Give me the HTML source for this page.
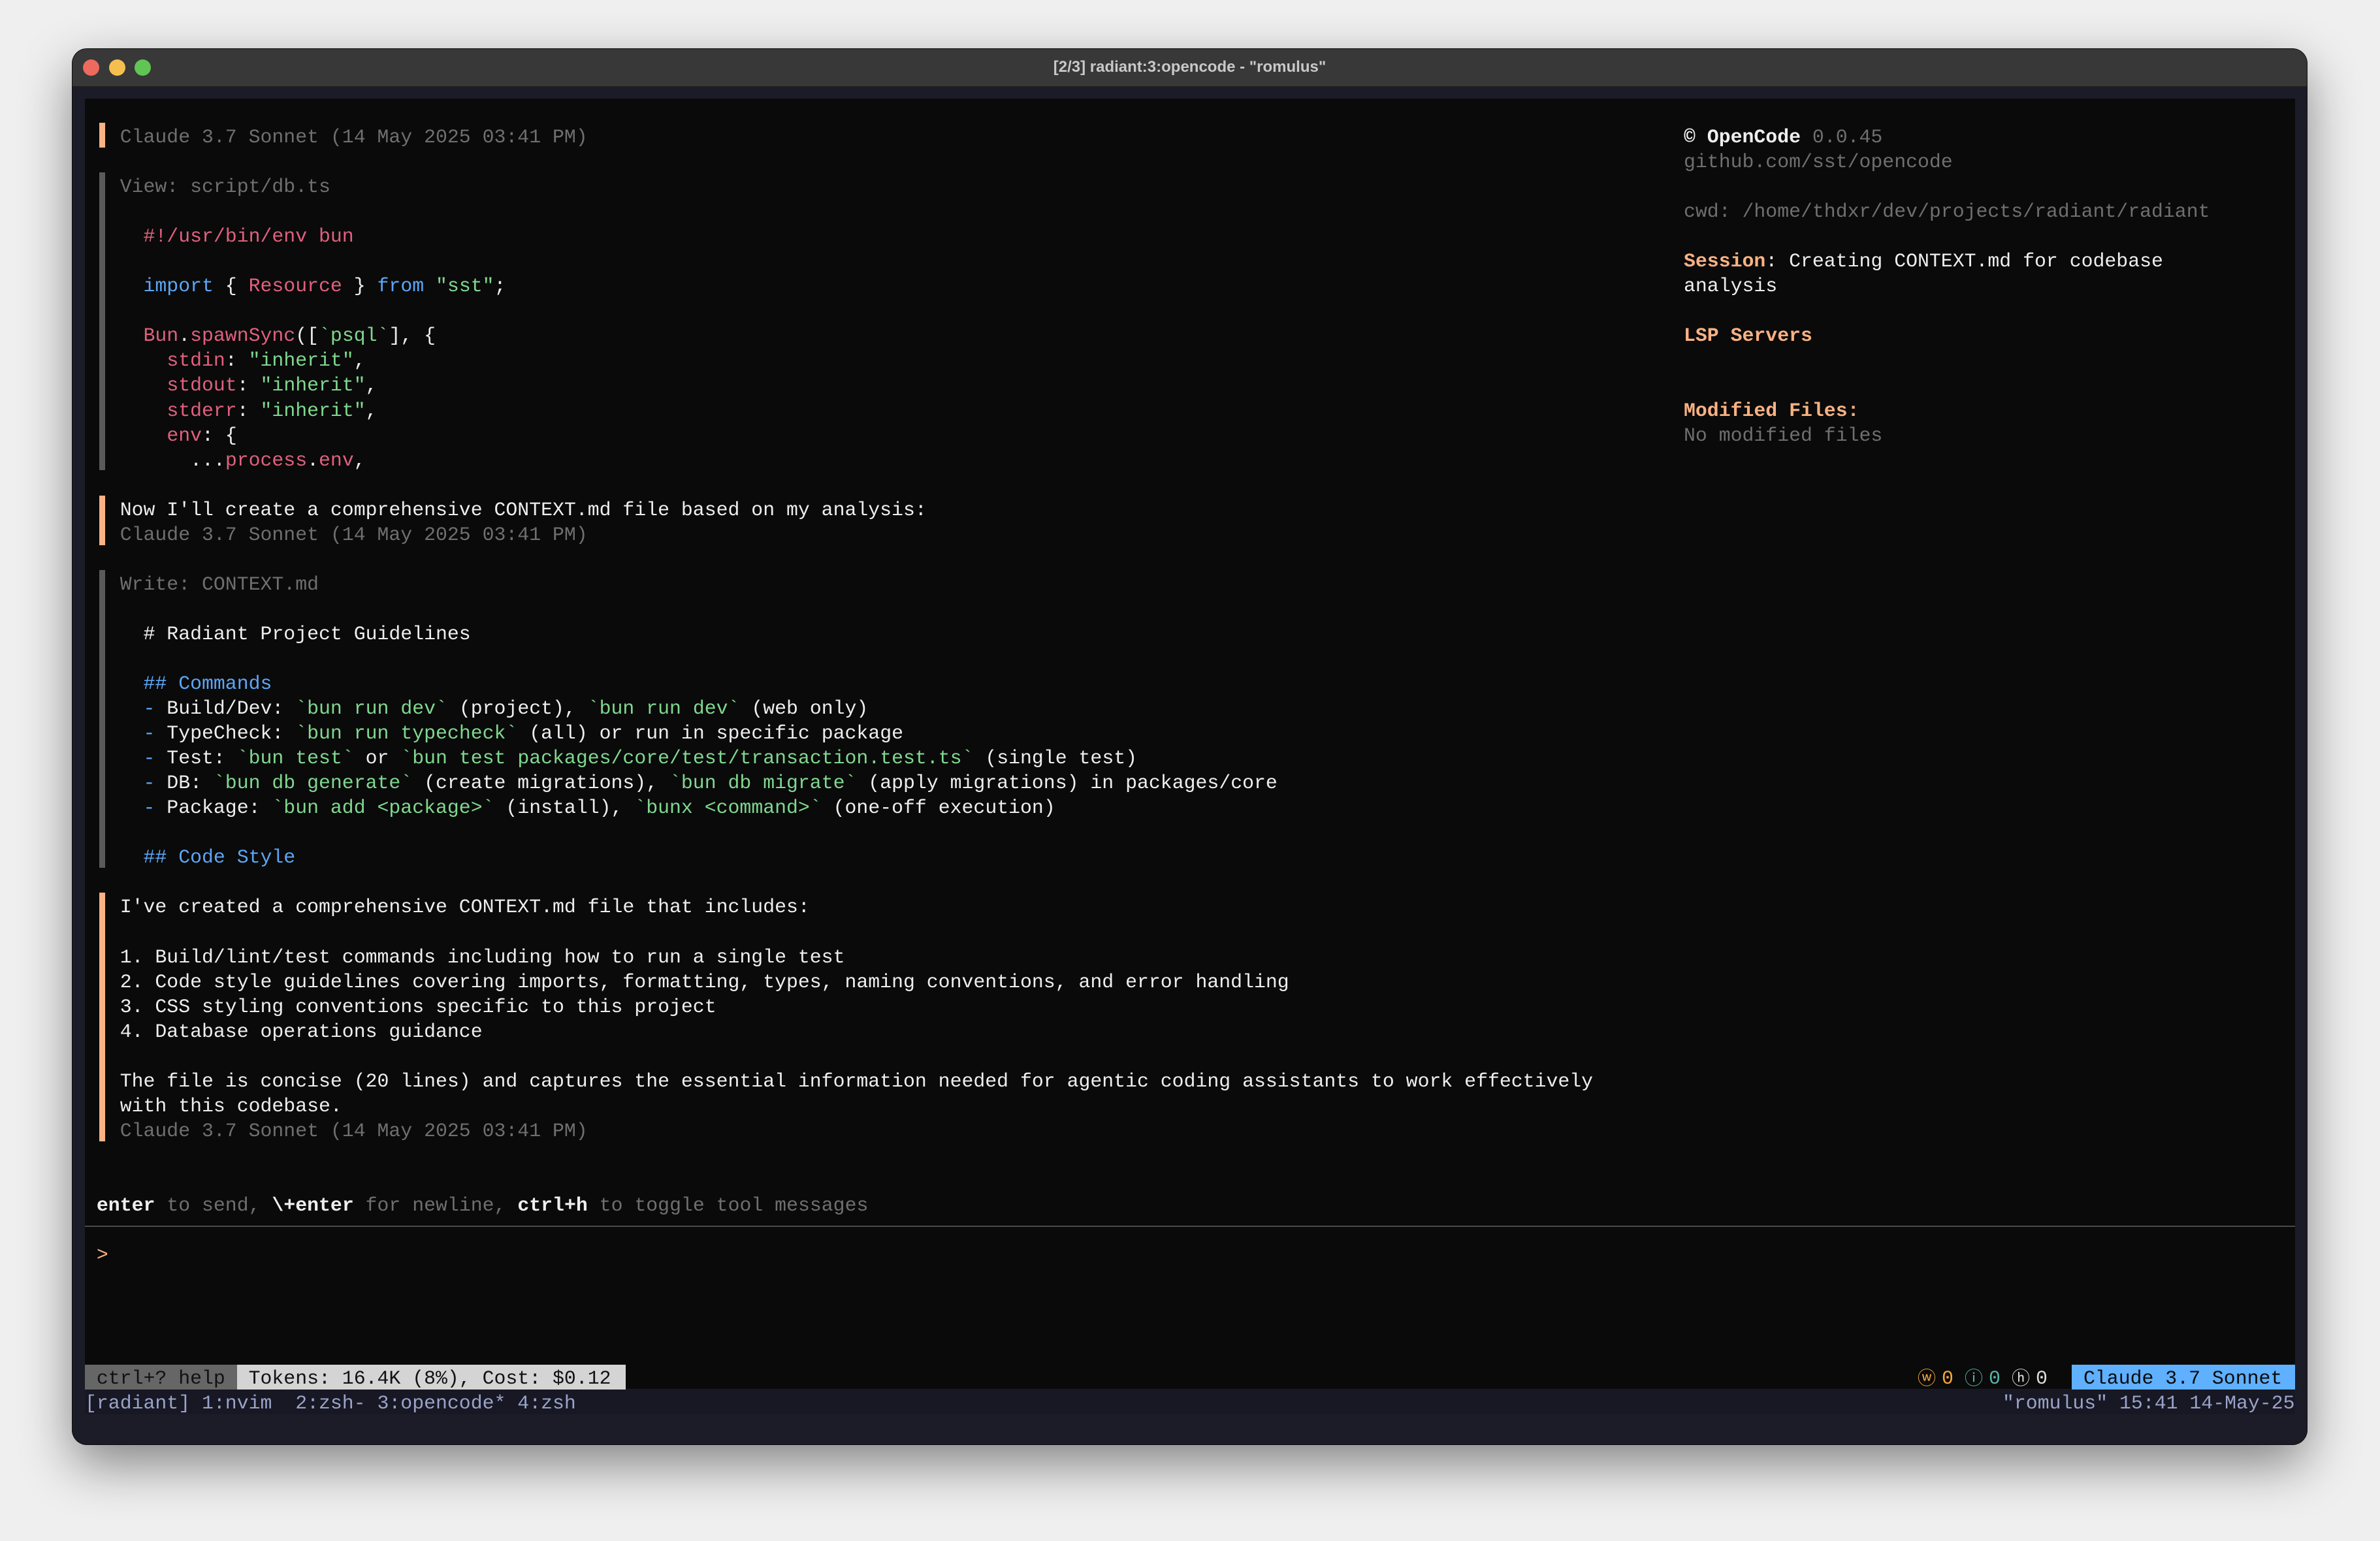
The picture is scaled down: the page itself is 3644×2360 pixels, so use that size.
<!DOCTYPE html>
<html><head><meta charset="utf-8">
<style>
html,body{margin:0;padding:0;}
body{width:3644px;height:2360px;background:#efefef;position:relative;overflow:hidden;font-family:"Liberation Mono",monospace;}
.win{position:absolute;left:111px;top:75px;width:3421px;height:2137px;border-radius:22px;background:#1c1c28;box-shadow:0 30px 80px rgba(0,0,0,.45),0 0 0 1px #111;overflow:hidden;}
.title{position:absolute;left:0;top:0;width:100%;height:57px;background:#383838;border-bottom:2px solid #1e1e1e;}
.tl{position:absolute;top:16px;width:25px;height:25px;border-radius:50%;}
.ttext{position:absolute;left:0;width:100%;top:14px;text-align:center;color:#c8c8c8;font:bold 24px "Liberation Sans",sans-serif;}
.term{position:absolute;left:130px;top:151px;width:3384px;height:1976px;background:#0a0a0a;}
pre{margin:0;position:absolute;font-family:"Liberation Mono",monospace;font-size:29.83px;line-height:38.05px;color:#eeeeee;white-space:pre;}
.m{color:#6f6f6f}.r{color:#e0607e}.b{color:#5ca6f5}.g{color:#7fd88f}.o{color:#fab283}.w{color:#eee}.B{font-weight:bold}
.bar{position:absolute;left:152px;width:9px;}
.ic{font-family:"DejaVu Sans",sans-serif;font-size:28px;}
</style></head><body>
<div class="win">
 <div class="title">
  <div class="tl" style="left:16px;background:#ed6a5e"></div>
  <div class="tl" style="left:56px;background:#f5bf4f"></div>
  <div class="tl" style="left:95px;background:#61c554"></div>
  <div class="ttext">[2/3] radiant:3:opencode - "romulus"</div>
 </div>
</div>
<div class="term"></div>
<div class="bar" style="top:188px;height:38px;background:#fab283"></div>
<div class="bar" style="top:264px;height:456px;background:#5a5a5a"></div>
<div class="bar" style="top:759px;height:76px;background:#fab283"></div>
<div class="bar" style="top:873px;height:456px;background:#5a5a5a"></div>
<div class="bar" style="top:1367px;height:381px;background:#fab283"></div>
<div style="position:absolute;left:130px;top:1877px;width:3384px;height:2px;background:#4a4a4a"></div>
<pre style="left:130px;top:191px;"><span class="m">   Claude 3.7 Sonnet (14 May 2025 03:41 PM)</span>

<span class="m">   View: script/db.ts</span>

     <span class="r">#!/usr/bin/env bun</span>

     <span class="b">import</span> { <span class="r">Resource</span> } <span class="b">from</span> <span class="g">"sst"</span>;

     <span class="r">Bun</span>.<span class="r">spawnSync</span>([<span class="g">`psql`</span>], {
       <span class="r">stdin</span>: <span class="g">"inherit"</span>,
       <span class="r">stdout</span>: <span class="g">"inherit"</span>,
       <span class="r">stderr</span>: <span class="g">"inherit"</span>,
       <span class="r">env</span>: {
         ...<span class="r">process</span>.<span class="r">env</span>,

   Now I'll create a comprehensive CONTEXT.md file based on my analysis:
<span class="m">   Claude 3.7 Sonnet (14 May 2025 03:41 PM)</span>

<span class="m">   Write: CONTEXT.md</span>

     # Radiant Project Guidelines

     <span class="b">## Commands</span>
     <span class="b">-</span> Build/Dev: <span class="g">`bun run dev`</span> (project), <span class="g">`bun run dev`</span> (web only)
     <span class="b">-</span> TypeCheck: <span class="g">`bun run typecheck`</span> (all) or run in specific package
     <span class="b">-</span> Test: <span class="g">`bun test`</span> or <span class="g">`bun test packages/core/test/transaction.test.ts`</span> (single test)
     <span class="b">-</span> DB: <span class="g">`bun db generate`</span> (create migrations), <span class="g">`bun db migrate`</span> (apply migrations) in packages/core
     <span class="b">-</span> Package: <span class="g">`bun add &lt;package&gt;`</span> (install), <span class="g">`bunx &lt;command&gt;`</span> (one-off execution)

     <span class="b">## Code Style</span>

   I've created a comprehensive CONTEXT.md file that includes:

   1. Build/lint/test commands including how to run a single test
   2. Code style guidelines covering imports, formatting, types, naming conventions, and error handling
   3. CSS styling conventions specific to this project
   4. Database operations guidance

   The file is concise (20 lines) and captures the essential information needed for agentic coding assistants to work effectively
   with this codebase.
<span class="m">   Claude 3.7 Sonnet (14 May 2025 03:41 PM)</span>


 <span class="B">enter</span> <span class="m">to send,</span> <span class="B">\+enter</span> <span class="m">for newline,</span> <span class="B">ctrl+h</span> <span class="m">to toggle tool messages</span>

 <span class="o">&gt;</span></pre>
<pre style="left:2578px;top:191px;"><span class="B">© OpenCode</span> <span class="m">0.0.45</span>
<span class="m">github.com/sst/opencode</span>

<span class="m">cwd: /home/thdxr/dev/projects/radiant/radiant</span>

<span class="o B">Session</span>: Creating CONTEXT.md for codebase
analysis

<span class="o B">LSP Servers</span>


<span class="o B">Modified Files:</span>
<span class="m">No modified files</span></pre>
<div style="position:absolute;left:130px;top:2090px;width:233px;height:38px;background:#666"></div>
<div style="position:absolute;left:363px;top:2090px;width:595px;height:38px;background:#d4d4d4"></div>
<pre style="left:130px;top:2092px;color:#111"> ctrl+? help  Tokens: 16.4K (8%), Cost: $0.12</pre>
<div style="position:absolute;left:3172px;top:2090px;width:342px;height:38px;background:#5fb0ff"></div>
<pre class="ic" style="left:2936px;top:2092px;color:#f5a742">ⓦ</pre>
<pre style="left:2973px;top:2092px;color:#f5a742">0</pre>
<pre class="ic" style="left:3008px;top:2092px;color:#56b6a8">ⓘ</pre>
<pre style="left:3045px;top:2092px;color:#56b6a8">0</pre>
<pre class="ic" style="left:3080px;top:2092px;color:#ddd">ⓗ</pre>
<pre style="left:3117px;top:2092px;color:#ddd">0</pre>
<pre style="left:3190px;top:2092px;color:#0a0a0a">Claude 3.7 Sonnet</pre>
<div style="position:absolute;left:130px;top:2128px;width:3384px;height:38px;background:#171824"></div>
<pre style="left:130px;top:2130px;color:#9aa3c8">[radiant] 1:nvim  2:zsh- 3:opencode* 4:zsh</pre>
<pre style="left:3066px;top:2130px;color:#9aa3c8">"romulus" 15:41 14-May-25</pre>
</body></html>
